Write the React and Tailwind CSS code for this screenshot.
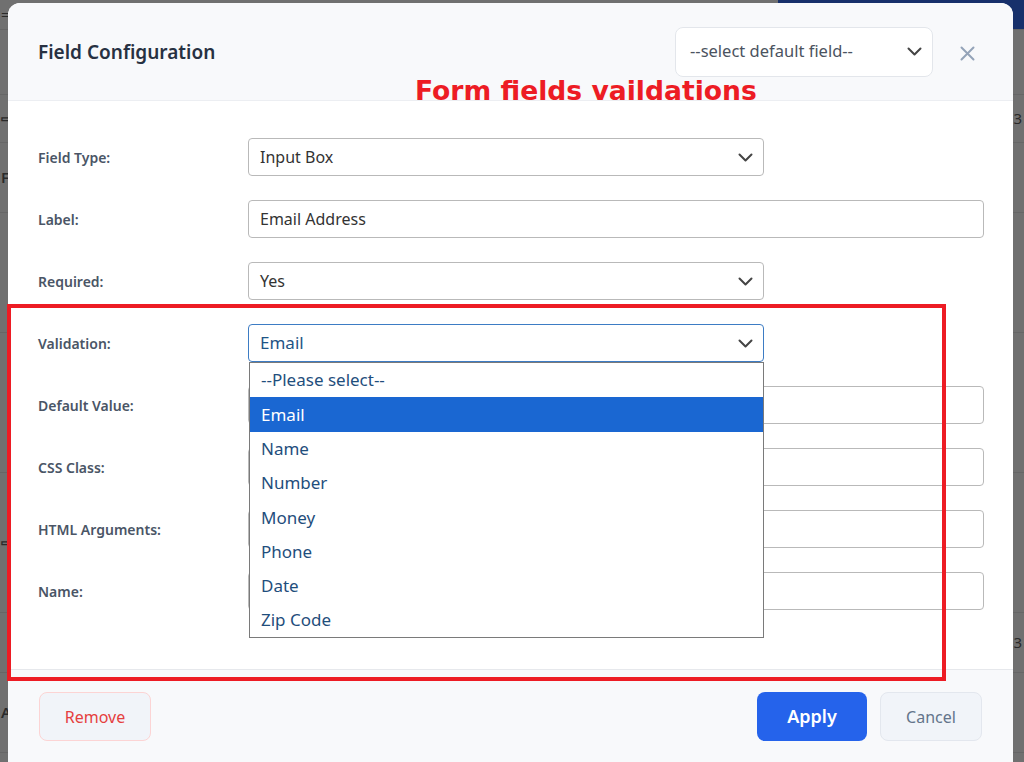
import React from "react";

const Chevron = ({ className = "" }) => (
  <svg width="15" height="9" viewBox="0 0 15 9" className={className} fill="none">
    <path d="M1.5 1.5 L7.5 7.5 L13.5 1.5" stroke="#444" strokeWidth="2" strokeLinecap="round" strokeLinejoin="round" />
  </svg>
);

const SelectBox = ({ value, focused }) => (
  <div
    className={`flex h-[38px] w-[516px] items-center justify-between rounded-[4px] border bg-white pl-[11px] pr-[10px] ${
      focused ? "border-[#3d7cc4] text-[#1f5486] text-[17px]" : "border-[#b9b9b9] text-[#333] text-[16px]"
    }`}
  >
    <span>{value}</span>
    <Chevron />
  </div>
);

const InputBox = ({ value }) => (
  <div className="flex h-[38px] w-[736px] items-center rounded-[4px] border border-[#b9b9b9] bg-white pl-[11px] text-[16px] text-[#333]">
    {value}
  </div>
);

const Row = ({ label, children }) => (
  <div className="relative flex h-[38px] items-center">
    <div className="w-[210px] text-[14px] font-semibold text-[#4a5566]">{label}</div>
    {children}
  </div>
);

const options = ["--Please select--", "Email", "Name", "Number", "Money", "Phone", "Date", "Zip Code"];

const BgRow = ({ h, left, right }) => (
  <div className={`flex items-center justify-between border-b border-[#666] text-[#2a2a2a] ${h}`}>
    <span className="pl-[1px] text-[15px] font-semibold">{left}</span>
    <span className="pr-[2px] text-[15px]">{right}</span>
  </div>
);

export default function App() {
  return (
    <div
      className="relative h-[762px] w-[1024px] overflow-hidden bg-[#707070]"
      style={{ fontFamily: '"Noto Sans", "Open Sans", sans-serif' }}
    >
      {/* background page */}
      <div className="flex h-full flex-col">
        <div className="flex h-[30px] items-center border-b border-[#666]">
          <span className="pl-[1px] text-[15px] text-[#2a2a2a]">=</span>
          <div className="flex-1" />
          <div className="h-full w-[246px] bg-[#17306b]" />
        </div>
        <BgRow h="h-[65px]" left="" right="" />
        <BgRow h="h-[48px]" left="⇨" right="3" />
        <BgRow h="h-[70px]" left="F" right="" />
        <BgRow h="h-[120px]" left="" right="" />
        <BgRow h="h-[140px]" left="" right="" />
        <BgRow h="h-[140px]" left="⇨" right="" />
        <BgRow h="h-[60px]" left="" right="3" />
        <BgRow h="h-[80px]" left="A" right="" />
      </div>

      {/* modal */}
      <div className="absolute left-[8px] top-[3px] flex h-[775px] w-[1005px] flex-col overflow-hidden rounded-[12px] bg-white">
        <div className="flex h-[98px] shrink-0 items-center border-b border-[#eceef2] bg-[#f8f9fb] pl-[30px] pr-[38px]">
          <div className="pt-[2px] text-[19px] font-semibold text-[#273142]">Field Configuration</div>
          <div className="flex-1" />
          <div className="flex h-[50px] w-[258px] items-center justify-between rounded-[8px] border border-[#e3e6eb] bg-white pl-[14px] pr-[10px] text-[16.5px] text-[#4b5360]">
            <span>--select default field--</span>
            <Chevron />
          </div>
          <div className="ml-[26px] flex h-[16px] w-[16px] items-center justify-center pt-[4px]">
            <svg width="15" height="15" viewBox="0 0 15 15" fill="none">
              <path d="M1.5 1.5 L13.5 13.5 M13.5 1.5 L1.5 13.5" stroke="#94a3b8" strokeWidth="2" strokeLinecap="round" />
            </svg>
          </div>
        </div>

        <div className="flex h-[569px] shrink-0 flex-col gap-[24px] border-b border-[#e6e8ec] pl-[30px] pt-[37px]">
          <Row label="Field Type:">
            <SelectBox value="Input Box" />
          </Row>
          <Row label="Label:">
            <InputBox value="Email Address" />
          </Row>
          <Row label="Required:">
            <SelectBox value="Yes" />
          </Row>
          <Row label="Validation:">
            <SelectBox value="Email" focused />
            <div className="absolute left-[211px] top-[38px] z-10 w-[515px] border border-[#7a7a7a] bg-white">
              {options.map((o) => (
                <div
                  key={o}
                  className={`flex h-[34.3px] items-center pl-[11px] text-[17px] ${
                    o === "Email" ? "bg-[#1a67d2] text-white" : "text-[#1f4e7c]"
                  }`}
                >
                  {o}
                </div>
              ))}
            </div>
          </Row>
          <Row label="Default Value:">
            <InputBox value="" />
          </Row>
          <Row label="CSS Class:">
            <InputBox value="" />
          </Row>
          <Row label="HTML Arguments:">
            <InputBox value="" />
          </Row>
          <Row label="Name:">
            <InputBox value="" />
          </Row>
        </div>

        <div className="flex flex-1 items-start bg-[#f8f9fb] pl-[31px] pr-[31px] pt-[22px]">
          <button className="flex h-[49px] w-[112px] items-center justify-center rounded-[8px] border border-[#fcd4d4] bg-[#f1f4f9] text-[16px] text-[#e53e3e]">
            Remove
          </button>
          <div className="flex-1" />
          <button className="flex h-[49px] w-[110px] items-center justify-center rounded-[8px] bg-[#2563eb] text-[18px] font-semibold text-white">
            Apply
          </button>
          <button className="ml-[13px] flex h-[49px] w-[102px] items-center justify-center rounded-[8px] border border-[#e3e7ee] bg-[#f1f4f9] text-[16px] text-[#64748b]">
            Cancel
          </button>
        </div>
      </div>

      {/* annotations */}
      <div className="pointer-events-none absolute left-[7px] top-[304px] h-[377px] w-[939px] border-[4px] border-[#ed1c24]" />
      <div
        className="pointer-events-none absolute left-[415px] top-[74px] text-[26.6px] font-bold leading-[34px] text-[#ed1c24]"
        style={{ fontFamily: '"DejaVu Sans", Verdana, sans-serif' }}
      >
        Form fields vaildations
      </div>
    </div>
  );
}
